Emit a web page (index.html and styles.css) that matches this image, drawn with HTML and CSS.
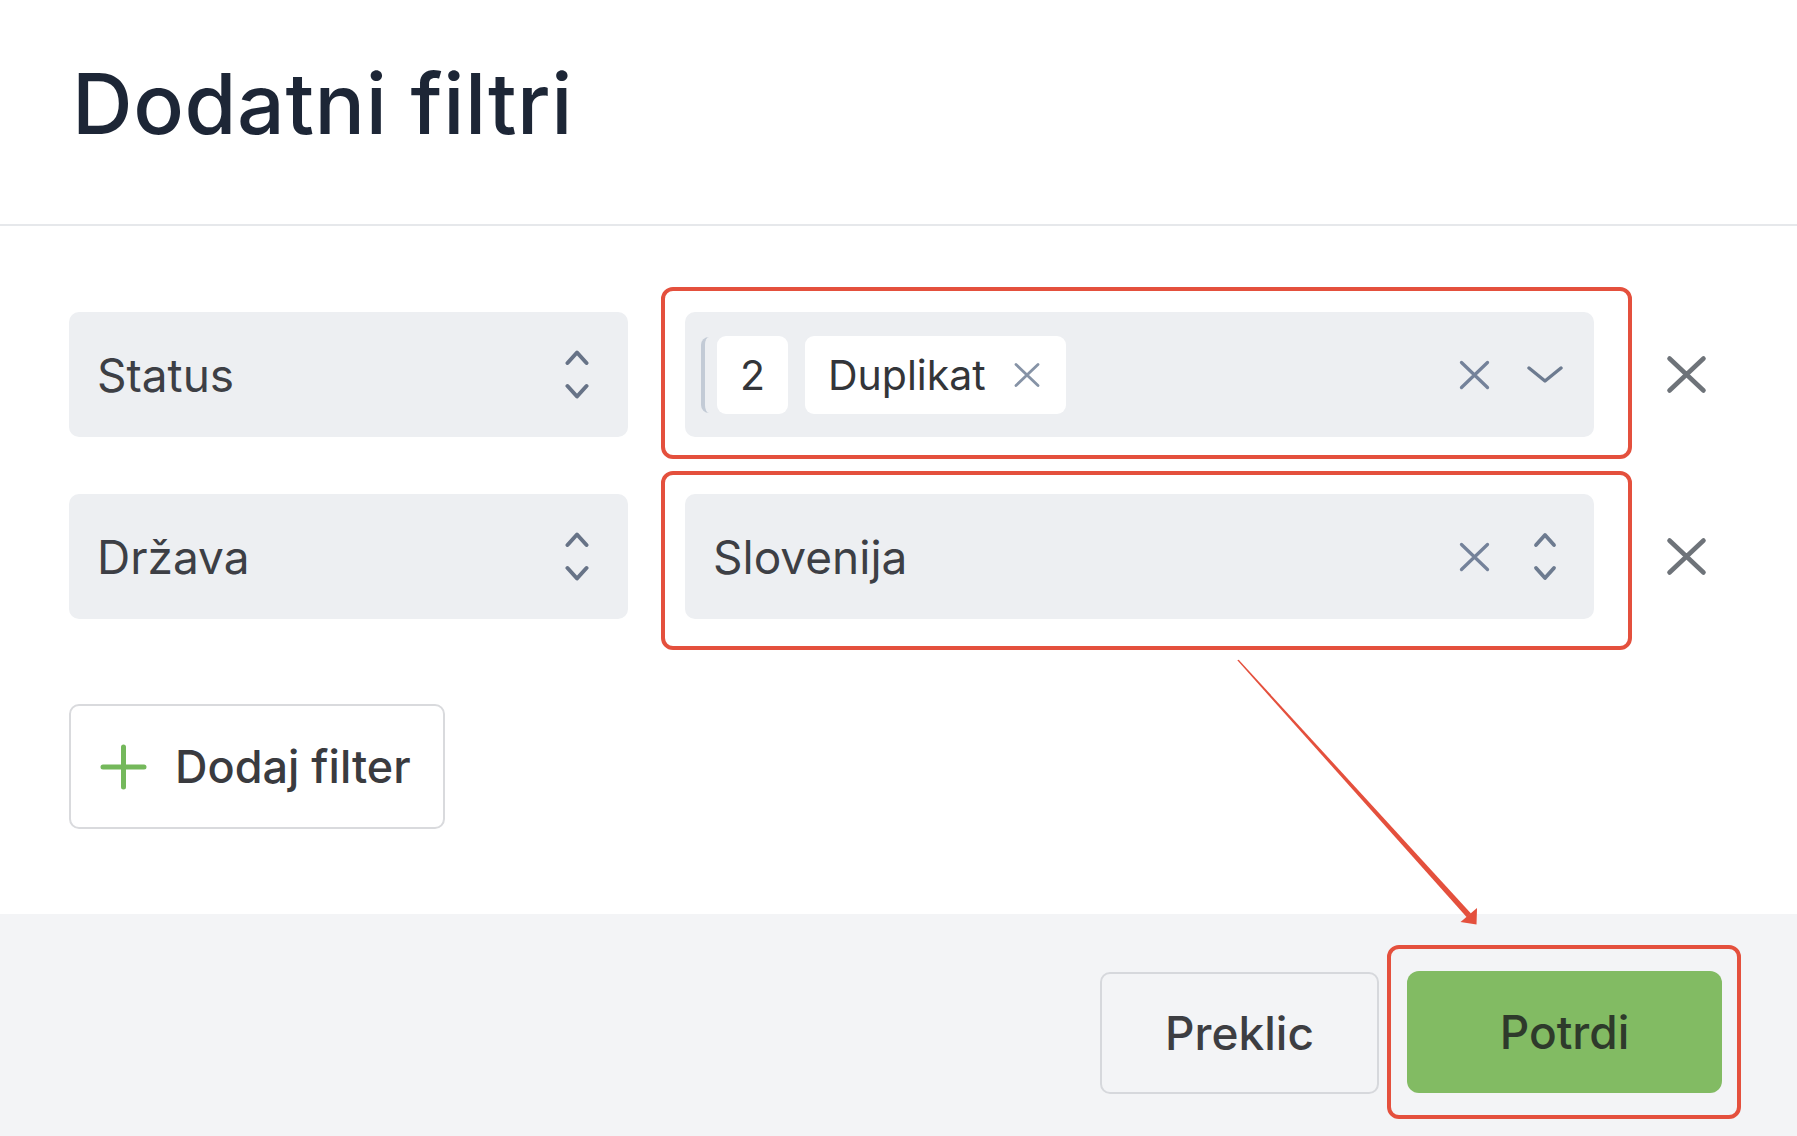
FILE: index.html
```html
<!DOCTYPE html>
<html lang="sl">
<head>
<meta charset="utf-8">
<title>Dodatni filtri</title>
<link rel="stylesheet" href="styles.css">
</head>
<body>
<div class="modal">
  <header class="modal-header">
    <h1 class="title">Dodatni filtri</h1>
  </header>

  <main class="modal-body">
    <div class="filter-rows">
      <div class="filter-row">
        <div class="select field-key">
          <span class="select-text">Status</span>
          <svg class="icon-updown" width="24" height="49" viewBox="0 0 24 49"><path d="M2.5 13L12 2.5L21.5 13M2.5 36L12 46.5L21.5 36" fill="none" stroke="#677387" stroke-width="4" stroke-linecap="round" stroke-linejoin="round"/></svg>
        </div>
        <div class="select field-value">
          <div class="value-chips">
            <span class="chip-edge"></span>
            <span class="chip chip-count">2</span>
            <span class="chip chip-tag">Duplikat
              <svg width="28" height="26" viewBox="0 0 28 26"><path d="M3 2.5L25 23.5M25 2.5L3 23.5" stroke="#8693a6" stroke-width="2.8" stroke-linecap="round"/></svg>
            </span>
          </div>
          <div class="select-icons">
            <svg width="31" height="30" viewBox="0 0 31 30"><path d="M2.5 2.5L28.5 27.5M28.5 2.5L2.5 27.5" stroke="#74829a" stroke-width="3.3" stroke-linecap="round"/></svg>
            <span class="icon-slot">
              <svg width="36" height="17" viewBox="0 0 36 17"><path d="M2 2L18 15L34 2" fill="none" stroke="#6d7b90" stroke-width="3.4" stroke-linecap="round" stroke-linejoin="round"/></svg>
            </span>
          </div>
        </div>
        <button class="row-remove" type="button" aria-label="Odstrani">
          <svg width="41" height="39" viewBox="0 0 41 39"><path d="M3.5 3.5L37.5 35.5M37.5 3.5L3.5 35.5" stroke="#6e7379" stroke-width="4.6" stroke-linecap="round"/></svg>
        </button>
      </div>

      <div class="filter-row">
        <div class="select field-key">
          <span class="select-text">Država</span>
          <svg class="icon-updown" width="24" height="49" viewBox="0 0 24 49"><path d="M2.5 13L12 2.5L21.5 13M2.5 36L12 46.5L21.5 36" fill="none" stroke="#677387" stroke-width="4" stroke-linecap="round" stroke-linejoin="round"/></svg>
        </div>
        <div class="select field-value">
          <span class="select-text">Slovenija</span>
          <div class="select-icons">
            <svg width="31" height="30" viewBox="0 0 31 30"><path d="M2.5 2.5L28.5 27.5M28.5 2.5L2.5 27.5" stroke="#74829a" stroke-width="3.3" stroke-linecap="round"/></svg>
            <span class="icon-slot">
              <svg width="24" height="49" viewBox="0 0 24 49"><path d="M3 13L12 3L21 13M3 36L12 46L21 36" fill="none" stroke="#6d7b90" stroke-width="3.8" stroke-linecap="round" stroke-linejoin="round"/></svg>
            </span>
          </div>
        </div>
        <button class="row-remove" type="button" aria-label="Odstrani">
          <svg width="41" height="39" viewBox="0 0 41 39"><path d="M3.5 3.5L37.5 35.5M37.5 3.5L3.5 35.5" stroke="#6e7379" stroke-width="4.6" stroke-linecap="round"/></svg>
        </button>
      </div>
    </div>

    <button class="add-filter" type="button">
      <svg width="47" height="46" viewBox="0 0 47 46"><path d="M23.5 3V43M3 23H44" stroke="#74b85b" stroke-width="5" stroke-linecap="round"/></svg>
      <span>Dodaj filter</span>
    </button>
  </main>

  <footer class="modal-footer">
    <button class="btn btn-cancel" type="button">Preklic</button>
    <button class="btn btn-confirm" type="button">Potrdi</button>
  </footer>

  <div class="annotations">
    <div class="mark mark-status"></div>
    <div class="mark mark-country"></div>
    <div class="mark mark-confirm"></div>
    <svg class="arrow" width="1797" height="1136" viewBox="0 0 1797 1136">
      <polygon points="1237.3,660.3 1238.7,659.7 1471,913.4 1467,917.6" fill="#e4503d"/>
      <polygon points="1477,908 1476.5,924.5 1460.5,922" fill="#e4503d"/>
    </svg>
  </div>
</div>
</body>
</html>
```

FILE: styles.css
```css
* {
  box-sizing: border-box;
}

html, body {
  margin: 0;
  padding: 0;
  background: #ffffff;
}

body {
  font-family: Inter, "Noto Sans", "Liberation Sans", sans-serif;
  color: #3d3f45;
  width: 1797px;
  height: 1136px;
  overflow: hidden;
}

.modal {
  position: relative;
  width: 1797px;
  height: 1136px;
  display: flex;
  flex-direction: column;
  background: #ffffff;
}

.modal-header {
  height: 226px;
  padding: 62px 0 0 72px;
  border-bottom: 2px solid #e6e8eb;
}

.title {
  margin: 0;
  font-size: 84px;
  line-height: 84px;
  font-weight: 500;
  color: #1d2636;
  letter-spacing: 0.6px;
}

.modal-body {
  padding: 86px 0 85px 69px;
}

.filter-rows {
  display: flex;
  flex-direction: column;
  gap: 57px;
}

.filter-row {
  display: flex;
  align-items: center;
  height: 125px;
}

.select {
  height: 125px;
  background: #edeff2;
  border-radius: 10px;
  display: flex;
  align-items: center;
  justify-content: space-between;
}

.select-text {
  font-size: 46px;
  font-weight: 400;
  color: #3d3f45;
}

.field-key {
  width: 559px;
  padding: 0 39px 0 28px;
}

.field-value {
  width: 909px;
  margin-left: 57px;
  padding: 0 31px 0 28px;
}

.value-chips {
  display: flex;
  align-items: center;
  margin-left: -12px;
}

.chip-edge {
  width: 8px;
  height: 76px;
  border-left: 4px solid #c3cbd6;
  border-radius: 10px 0 0 10px;
}

.chip {
  height: 78px;
  background: #ffffff;
  border-radius: 9px;
  display: flex;
  align-items: center;
  font-size: 41px;
  color: #333539;
}

.chip-count {
  width: 71px;
  justify-content: center;
  margin-left: 8px;
}

.chip-tag {
  margin-left: 17px;
  padding: 0 25px 0 23px;
  gap: 27px;
}

.select-icons {
  display: flex;
  align-items: center;
  gap: 37px;
}

.icon-slot {
  width: 36px;
  display: flex;
  justify-content: center;
}

.row-remove {
  margin-left: 72px;
  width: 41px;
  height: 39px;
  padding: 0;
  border: 0;
  background: transparent;
  display: flex;
}

.add-filter {
  margin-top: 85px;
  width: 376px;
  height: 125px;
  display: flex;
  align-items: center;
  gap: 28px;
  padding: 0 0 0 29px;
  background: #ffffff;
  border: 2px solid #d9dadd;
  border-radius: 10px;
  font-family: inherit;
  font-size: 45px;
  font-weight: 500;
  color: #3a3b3f;
}

.modal-footer {
  flex: 1;
  background: #f3f4f6;
  display: flex;
  justify-content: flex-end;
  align-items: flex-start;
  gap: 28px;
  padding: 57px 75px 0 0;
}

.btn {
  height: 122px;
  border-radius: 10px;
  font-family: inherit;
  font-size: 46px;
  font-weight: 500;
  display: flex;
  align-items: center;
  justify-content: center;
}

.btn-cancel {
  width: 279px;
  margin-top: 1px;
  background: #f3f4f6;
  border: 2px solid #d6d8dc;
  color: #3d3e42;
}

.btn-confirm {
  width: 315px;
  background: #82bb63;
  border: 0;
  border-radius: 12px;
  color: #2e3a2b;
}

.annotations {
  position: absolute;
  inset: 0;
  pointer-events: none;
}

.mark {
  position: absolute;
  border: 4px solid #e4503d;
  border-radius: 12px;
}

.mark-status {
  left: 661px;
  top: 287px;
  width: 971px;
  height: 172px;
}

.mark-country {
  left: 661px;
  top: 471px;
  width: 971px;
  height: 179px;
}

.mark-confirm {
  left: 1387px;
  top: 945px;
  width: 354px;
  height: 174px;
}

.arrow {
  position: absolute;
  left: 0;
  top: 0;
}
```
